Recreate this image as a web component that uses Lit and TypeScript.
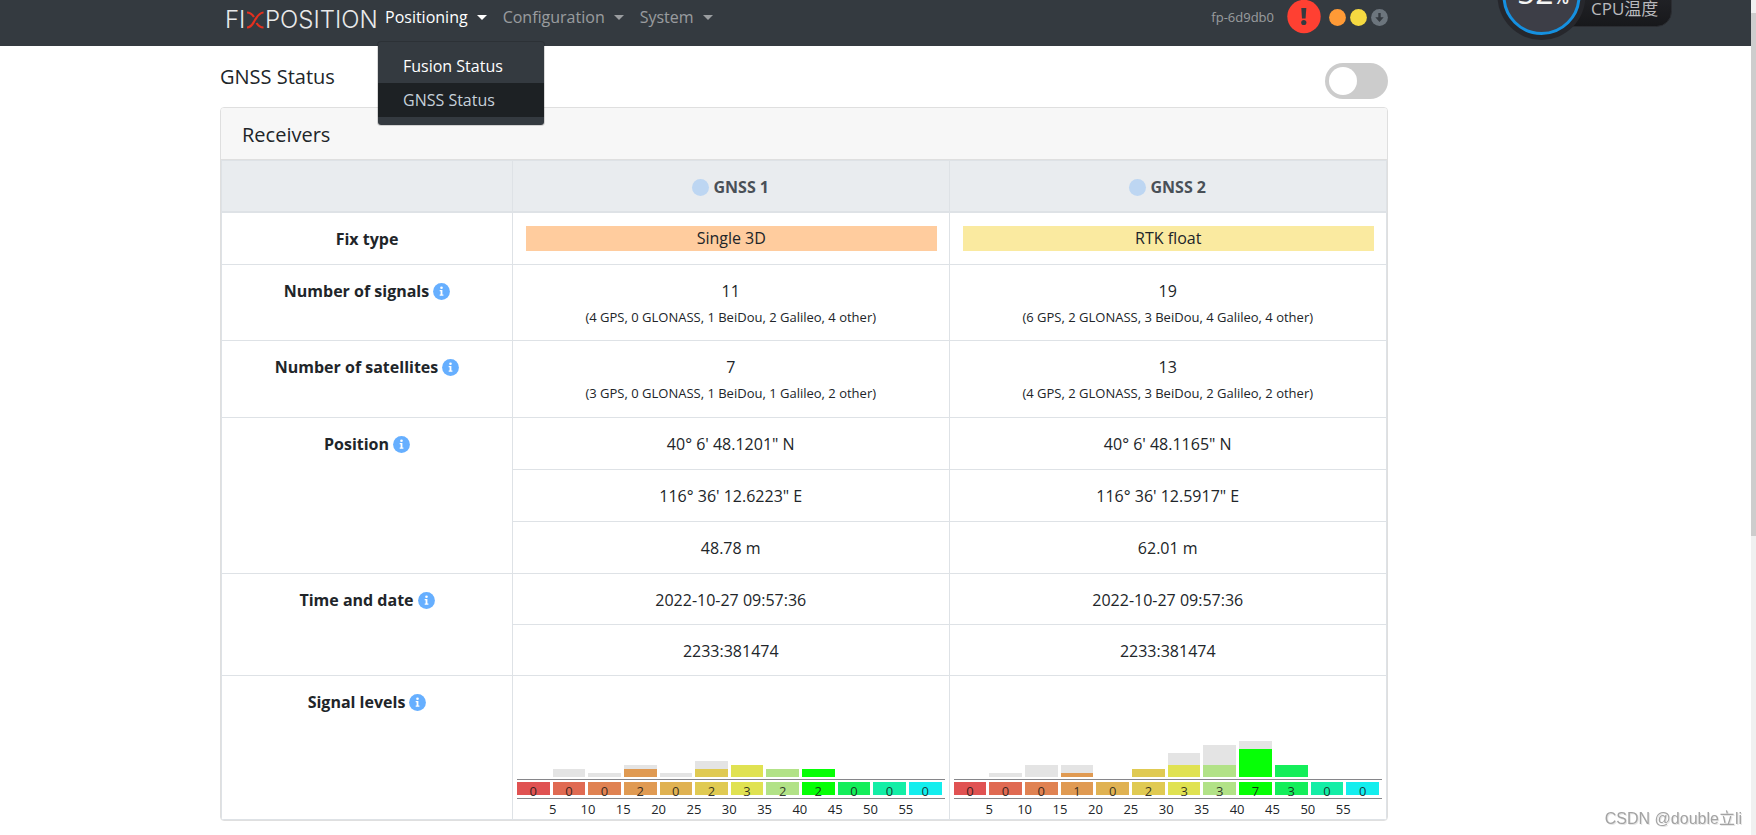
import { LitElement, html, svg, css, nothing } from "lit";
import { customElement, property, state } from "lit/decorators.js";
import { classMap } from "lit/directives/class-map.js";
import { styleMap } from "lit/directives/style-map.js";

interface Bin {
  tracked: number;
  used: number;
}

interface Receiver {
  name: string;
  fix: string;
  fixClass: string;
  signals: string;
  signalDetail: string;
  satellites: string;
  satelliteDetail: string;
  position: string[];
  time: string[];
  levels: Bin[];
}

const bins = (tracked: number[], used: number[]): Bin[] =>
  tracked.map((t, i) => ({ tracked: t, used: used[i] }));

const RECEIVERS: Receiver[] = [
  {
    name: "GNSS 1",
    fix: "Single 3D",
    fixClass: "single",
    signals: "11",
    signalDetail: "(4 GPS, 0 GLONASS, 1 BeiDou, 2 Galileo, 4 other)",
    satellites: "7",
    satelliteDetail: "(3 GPS, 0 GLONASS, 1 BeiDou, 1 Galileo, 2 other)",
    position: ["40° 6' 48.1201\" N", "116° 36' 12.6223\" E", "48.78 m"],
    time: ["2022-10-27 09:57:36", "2233:381474"],
    levels: bins([0, 2, 1, 3, 1, 4, 3, 2, 2, 0, 0, 0], [0, 0, 0, 2, 0, 2, 3, 2, 2, 0, 0, 0]),
  },
  {
    name: "GNSS 2",
    fix: "RTK float",
    fixClass: "float",
    signals: "19",
    signalDetail: "(6 GPS, 2 GLONASS, 3 BeiDou, 4 Galileo, 4 other)",
    satellites: "13",
    satelliteDetail: "(4 GPS, 2 GLONASS, 3 BeiDou, 2 Galileo, 2 other)",
    position: ["40° 6' 48.1165\" N", "116° 36' 12.5917\" E", "62.01 m"],
    time: ["2022-10-27 09:57:36", "2233:381474"],
    levels: bins([0, 1, 3, 3, 0, 2, 6, 8, 9, 3, 0, 0], [0, 0, 0, 1, 0, 2, 3, 3, 7, 3, 0, 0]),
  },
];

const LEVEL_COLORS = [
  "#e05252", "#e06a52", "#e08252", "#e09a52", "#e0b252", "#e0ca52",
  "#e0e252", "#b2e287", "#06ff06", "#14ee5a", "#14eea6", "#14eeee",
];

const UNIT = 4;

@customElement("signal-chart")
class SignalChart extends LitElement {
  @property({ attribute: false }) levels: Bin[] = [];

  static styles = css`
    :host { display: block; font-size: 13px; color: #212529; }
    .plot, .counts { display: grid; grid-template-columns: repeat(12, minmax(0, 1fr)); column-gap: 3px; padding-right: 3px; }
    .plot { height: 101px; align-items: end; margin-bottom: 2px; }
    .bar { display: flex; flex-direction: column; justify-content: flex-end; background: #e4e4e4; }
    .counts { border: solid #86868a; border-width: 1px 0; padding-top: 2px; padding-bottom: 3px; }
    .count { height: 13px; line-height: 19px; text-align: center; color: rgba(20, 20, 20, 0.85); }
    .scale { display: grid; grid-template-columns: repeat(11, minmax(0, 1fr)); padding: 0 21px 0 18px; line-height: 20px; text-align: center; }
  `;

  render() {
    return html`
      <div class="plot">
        ${this.levels.map(
          (b, i) => html`<div class="bar" style=${styleMap({ height: `${b.tracked * UNIT}px` })}>
            <div style=${styleMap({ height: `${b.used * UNIT}px`, background: LEVEL_COLORS[i] })}></div>
          </div>`,
        )}
      </div>
      <div class="counts">
        ${this.levels.map(
          (b, i) => html`<div class="count" style=${styleMap({ background: LEVEL_COLORS[i] })}>${b.used}</div>`,
        )}
      </div>
      <div class="scale">
        ${Array.from({ length: 11 }, (_, i) => html`<span>${(i + 1) * 5}</span>`)}
      </div>
    `;
  }
}

@customElement("gauge-widget")
class GaugeWidget extends LitElement {
  static styles = css`
    :host { display: block; }
    svg { display: block; }
    .value { font: 400 32px "Open Sans", sans-serif; fill: #f4f4f4; }
    .unit { font-size: 18px; font-weight: 600; }
    .label { font: 17px "Open Sans", "Noto Sans CJK SC", sans-serif; fill: #b9b9bd; }
  `;

  render() {
    return html`<svg width="180" height="42" viewBox="0 0 180 42">
      <defs>
        <linearGradient id="pill" x1="0" y1="0" x2="0" y2="1">
          <stop offset="0" stop-color="#2a2b30" />
          <stop offset="1" stop-color="#17181b" />
        </linearGradient>
      </defs>
      <rect x="40" y="-30" width="136.500" height="56.500" rx="15" fill="url(#pill)" stroke="#2b2d32" />
      <circle cx="46.500" cy="-4" r="44" fill="#26272c" />
      <circle cx="46.500" cy="-4" r="37.500" fill="#3d3e47" stroke="#1590e0" stroke-width="3" />
      <text class="value" x="22" y="4">52<tspan class="unit">%</tspan></text>
      <text class="label" x="96" y="15">CPU温度</text>
    </svg>`;
  }
}

@customElement("app-root")
class AppRoot extends LitElement {
  @state() private openMenu = "Positioning";
  @state() private live = false;

  static styles = css`
    :host {
      display: flex;
      min-height: 100vh;
      box-sizing: border-box;
      background: #fff;
      color: #212529;
      font: 16px/25px "Open Sans", "Noto Sans", sans-serif;
    }
    * { box-sizing: border-box; }
    button { font: inherit; border: 0; background: none; cursor: pointer; }
    a { text-decoration: none; }
    .page { flex: 1; min-width: 0; }
    .frame { display: grid; grid-template-columns: 220px minmax(0, 1168px) 1fr; }
    .frame > * { grid-column: 2; }

    .topbar { position: relative; background: #343a40; padding-bottom: 12px; }
    .bar { display: flex; height: 34px; align-items: center; }
    .brand { width: 157px; padding: 6px 0 0 6px; }
    .brand svg { display: block; overflow: visible; }
    .brand text { font: 300 24px Inter, "Open Sans", sans-serif; fill: #e8e9ea; }
    .menus { display: flex; align-self: stretch; list-style: none; margin: 0; padding: 0; flex: 1; }
    .menu { position: relative; display: flex; }
    .toggle { display: flex; align-items: center; gap: 9px; padding: 0 8px; color: rgba(255, 255, 255, 0.5); }
    .toggle.current { color: #fff; }
    .toggle::after { content: ""; border: 5px solid transparent; border-top-color: currentColor; border-bottom: 0; }
    .dropdown {
      position: absolute; z-index: 2; top: 41px; left: 0; width: 168px; padding: 7px 0 8px;
      background: #343a40; border: 1px solid rgba(0, 0, 0, 0.15); border-radius: 4px; background-clip: padding-box;
    }
    .entry { display: block; padding: 5px 25px 4px; color: #fff; }
    .entry.active { background: #1d2124; color: #c6d0da; }
    .status { display: flex; align-items: center; gap: 4px; }
    .host { font-size: 13px; color: rgba(255, 255, 255, 0.5); margin-right: 9px; }
    .status svg { display: block; }
    .alert { margin-right: 4px; }
    .gauge { position: absolute; top: 0; right: 76px; }

    .heading { display: flex; justify-content: space-between; align-items: flex-start; padding: 17px 0 8px; }
    h1, h2 { margin: 0; font-size: 20px; line-height: 28px; font-weight: 400; }
    .switch { display: flex; width: 63px; height: 36px; padding: 4px; border-radius: 18px; background: #ccc; cursor: pointer; }
    .switch input { appearance: none; margin: 0; width: 28px; height: 28px; border-radius: 50%; background: #fff; cursor: pointer; }
    .switch.on { background: #2196f3; justify-content: flex-end; }

    .card { border: 1px solid #dfdfdf; border-radius: 4px; overflow: hidden; }
    .card-head { padding: 13px 21px 10px; background: #f7f7f7; border-bottom: 1px solid #dfdfdf; }
    table { width: 100%; table-layout: fixed; border-collapse: separate; border-spacing: 0; border: 1px solid #dee2e6; }
    .label-col { width: 25%; }
    th, td { padding: 14px 12px 12px; text-align: center; vertical-align: top; border: solid #dee2e6; border-width: 0 1px 1px 0; }
    .last-col { border-right: 0; }
    thead th { padding-bottom: 11px; background: #e9ecef; color: #495057; border-bottom-width: 2px; }
    .named { display: flex; justify-content: center; align-items: center; gap: 4px; }
    .dot { width: 17px; height: 17px; border-radius: 50%; background: #bdd6f2; }
    .fix-row td { padding: 13px 12px 13px 13px; }
    .fix.single { background: #ffcc9e; }
    .fix.float { background: #faeaa0; }
    .detail { margin-top: 3px; font-size: 13px; line-height: 20px; padding-bottom: 1px; }
    .satellites .detail { padding-bottom: 2px; }
    .time td { padding-bottom: 11px; }
    .levels th, .levels td { border-bottom: 0; }
    .levels td { padding: 0 4px; }

    .scrollbar { display: flex; flex-direction: column; width: 5px; background: #f0f0f0; }
    .thumb { flex: 0 0 523px; margin-top: 13px; background: #cdcdcd; }
    .watermark {
      position: fixed; right: 14px; bottom: 4px; color: #a3a3a3; text-shadow: 1px 1px 0 #e6e6e6;
      font: 16px/24px "Liberation Sans", "Noto Sans CJK SC", sans-serif;
    }
    @media (max-width: 1400px) {
      .frame { grid-template-columns: 16px minmax(0, 1fr) 16px; }
      .gauge { display: none; }
    }
  `;

  private flip(name: string) {
    this.openMenu = this.openMenu === name ? "" : name;
  }

  private info() {
    return html`<svg width="17" height="17" viewBox="0 0 17 17" role="img" aria-label="Info">
      <circle cx="8.5" cy="8.5" r="8.400" fill="#66afff" />
      <circle cx="8.500" cy="4.700" r="1.300" fill="#fff" />
      <path d="M6.700 7h2.700v4.400h1v1.300H6.700v-1.300h.9V8.300h-.9z" fill="#fff" />
    </svg>`;
  }

  private rowLabel(text: string, rows = 1, withInfo = true) {
    return html`<th scope="row" rowspan=${rows}>
      <div class="named">${text}${withInfo ? this.info() : nothing}</div>
    </th>`;
  }

  private cells(content: (r: Receiver) => unknown) {
    return RECEIVERS.map(
      (r, i) => html`<td class=${classMap({ "last-col": i === RECEIVERS.length - 1 })}>${content(r)}</td>`,
    );
  }

  private menu(name: string, entries: string[]) {
    const open = this.openMenu === name;
    return html`<li class="menu">
      <button
        class=${classMap({ toggle: true, current: name === "Positioning" })}
        aria-expanded=${open}
        @click=${() => this.flip(name)}
      >${name}</button>
      ${open && entries.length
        ? html`<div class="dropdown">
            ${entries.map(
              (e) => html`<a href="#" class=${classMap({ entry: true, active: e === "GNSS Status" })}>${e}</a>`,
            )}
          </div>`
        : nothing}
    </li>`;
  }

  private lamp(color: string, glyph: unknown = nothing) {
    return html`<svg width="17" height="17" viewBox="0 0 17 17">
      <circle cx="8.5" cy="8.5" r="8.400" fill=${color} />${glyph}
    </svg>`;
  }

  render() {
    return html`
      <div class="page">
        <header class="topbar frame">
          <div class="bar">
            <a class="brand" href="#" aria-label="Fixposition">
              <svg width="151" height="26" viewBox="0 0 151 26">
                <text x="-1" y="21">FI</text>
                <path d="M21 5.500c3.500 0 5 1.500 7 4.500M21 20.500c5 0 6-4.500 8-7.500s4-7.500 8.500-7.500M37.500 20.500c-3.500 0-5-1.500-7-4.500" fill="none" stroke="#e5301f" stroke-width="2.200" />
                <text x="39" y="21">POSITION</text>
              </svg>
            </a>
            <ul class="menus">
              ${this.menu("Positioning", ["Fusion Status", "GNSS Status"])}
              ${this.menu("Configuration", [])}
              ${this.menu("System", [])}
            </ul>
            <div class="status">
              <span class="host">fp-6d9db0</span>
              <svg class="alert" width="34" height="34" viewBox="0 0 34 34">
                <circle cx="17" cy="16.500" r="16.700" fill="#ff4032" />
                <path d="M14.300 8h5l-.7 10.500h-3.600z" fill="#343a40" />
                <circle cx="16.800" cy="22.500" r="2.600" fill="#343a40" />
              </svg>
              ${this.lamp("#ff9a36")}
              ${this.lamp("#f5d941")}
              ${this.lamp(
                "#6c757d",
                svg`<path d="M7.300 4h2.400v4.300h3L8.500 13 4.300 8.300h3z" fill="#343a40" />`,
              )}
            </div>
          </div>
          <gauge-widget class="gauge"></gauge-widget>
        </header>

        <main class="frame">
          <div class="heading">
            <h1>GNSS Status</h1>
            <label class=${classMap({ switch: true, on: this.live })}>
              <input
                type="checkbox"
                aria-label="Live update"
                .checked=${this.live}
                @change=${(e: Event) => (this.live = (e.target as HTMLInputElement).checked)}
              />
            </label>
          </div>
          <section class="card">
            <h2 class="card-head">Receivers</h2>
            <table>
              <colgroup><col class="label-col" /><col /><col /></colgroup>
              <thead>
                <tr>
                  <th></th>
                  ${RECEIVERS.map(
                    (r, i) => html`<th scope="col" class=${classMap({ "last-col": i === 1 })}>
                      <div class="named"><span class="dot"></span>${r.name}</div>
                    </th>`,
                  )}
                </tr>
              </thead>
              <tbody>
                <tr class="fix-row">
                  ${this.rowLabel("Fix type", 1, false)}
                  ${this.cells((r) => html`<div class="fix ${r.fixClass}">${r.fix}</div>`)}
                </tr>
                <tr>
                  ${this.rowLabel("Number of signals")}
                  ${this.cells((r) => html`${r.signals}<div class="detail">${r.signalDetail}</div>`)}
                </tr>
                <tr class="satellites">
                  ${this.rowLabel("Number of satellites")}
                  ${this.cells((r) => html`${r.satellites}<div class="detail">${r.satelliteDetail}</div>`)}
                </tr>
                ${[0, 1, 2].map(
                  (n) => html`<tr>
                    ${n === 0 ? this.rowLabel("Position", 3) : nothing}${this.cells((r) => r.position[n])}
                  </tr>`,
                )}
                ${[0, 1].map(
                  (n) => html`<tr class="time">
                    ${n === 0 ? this.rowLabel("Time and date", 2) : nothing}${this.cells((r) => r.time[n])}
                  </tr>`,
                )}
                <tr class="levels">
                  ${this.rowLabel("Signal levels")}
                  ${this.cells((r) => html`<signal-chart .levels=${r.levels}></signal-chart>`)}
                </tr>
              </tbody>
            </table>
          </section>
        </main>
      </div>
      <div class="scrollbar"><div class="thumb"></div></div>
      <div class="watermark">CSDN @double立li</div>
    `;
  }
}
